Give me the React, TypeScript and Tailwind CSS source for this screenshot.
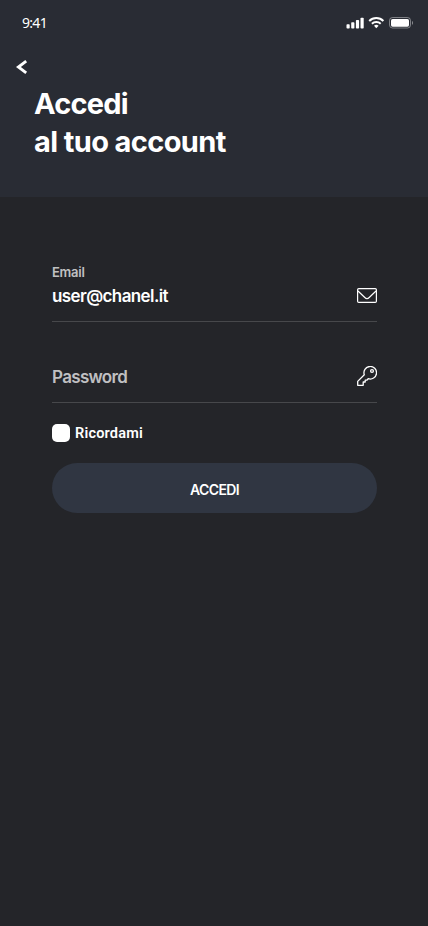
import React from "react";

function StatusBar() {
  return (
    <div className="flex h-[46px] items-center justify-between pl-[22px] pr-[15px] text-white">
      <span className="font-['Noto_Sans',sans-serif] text-[14px] leading-[20px] tracking-[-0.7px]">9:41</span>
      <svg width="67" height="14" viewBox="0 0 67 14" fill="none">
        <rect x="0.5" y="8.3" width="3.2" height="4.2" rx="0.8" fill="white" />
        <rect x="5.2" y="6.3" width="3.2" height="6.2" rx="0.8" fill="white" />
        <rect x="9.9" y="4" width="3.2" height="8.5" rx="0.8" fill="white" />
        <rect x="14.5" y="1.8" width="3.2" height="10.7" rx="0.8" fill="white" />
        <path d="M23.2 5A10.2 10.2 0 0 1 37.4 5M25.9 7.7A6.4 6.4 0 0 1 34.7 7.7" stroke="white" strokeWidth="2" />
        <path d="M28 9.8A3.5 3.5 0 0 1 32.6 9.8L30.3 12.2Z" fill="white" />
        <rect x="43.5" y="1.5" width="21" height="10.5" rx="3" stroke="white" strokeOpacity="0.4" />
        <rect x="45" y="3" width="18" height="7.7" rx="1.6" fill="white" />
        <path d="M66 5V8.8C66.8 8.3 67 7.6 67 6.9S66.7 5.4 66 5Z" fill="white" fillOpacity="0.45" />
      </svg>
    </div>
  );
}

function MailIcon() {
  return (
    <svg width="20" height="15" viewBox="0 0 20 15" fill="none" stroke="white" strokeWidth="1.2">
      <rect x="0.6" y="0.6" width="18.8" height="13.8" rx="1.2" />
      <path d="M1 3L7.8 9.5Q10 11.6 12.2 9.5L19 3" strokeLinejoin="round" />
    </svg>
  );
}

function KeyIcon() {
  return (
    <svg width="20" height="20" viewBox="0 0 20 20" fill="none" stroke="white" strokeWidth="1.3" strokeLinejoin="round">
      <path d="M7.3 8.8A6.3 6.3 0 1 1 11.2 12.7L9.8 14.2H8.2V16H6.2V19.3H0.7V15.4Z" />
      <circle cx="15" cy="5" r="1.4" />
    </svg>
  );
}

export default function App() {
  return (
    <main className="min-h-[926px] w-full bg-[#242529] font-['Inter',sans-serif]">
      <header className="h-[197px] bg-[#292c34]">
        <StatusBar />
        <button aria-label="Indietro" className="ml-[16px] mt-[13px] block h-[16px] w-[12px]">
          <svg width="12" height="16" viewBox="0 0 12 16" fill="none">
            <path d="M10.2 2.2L2.4 8L10.2 13.8" stroke="white" strokeWidth="2.9" />
          </svg>
        </button>
        <h1 className="ml-[34px] mt-[10px] text-[29px] font-bold leading-[38px] tracking-[-0.62px] text-white">
          <span className="tracking-[-0.8px]">Accedi</span>
          <br />
          al tuo account
        </h1>
      </header>
      <form className="px-[52px] pt-[66px]">
        <div className="flex h-[59px] w-[325px] justify-between border-b border-[#47484b]">
          <div className="flex flex-col">
            <label className="h-[18px] text-[13px] font-semibold leading-[18px] tracking-[-0.25px] text-[#c0c0c2]">Email</label>
            <span className="mt-[3px] text-[17px] font-semibold leading-[24px] tracking-[-0.6px] text-white">user@chanel.it</span>
          </div>
          <div className="mt-[25px]">
            <MailIcon />
          </div>
        </div>
        <div className="mt-[40px] flex h-[41px] w-[325px] justify-between border-b border-[#47484b]">
          <span className="mt-[3px] text-[17px] font-semibold leading-[24px] tracking-[-0.68px] text-[#c0c0c2]">Password</span>
          <div className="mt-[4px]">
            <KeyIcon />
          </div>
        </div>
        <label className="mt-[21px] flex h-[18px] items-center gap-[5px]">
          <span className="size-[18px] rounded-[5px] bg-white" />
          <span className="pt-[2px] font-['Roboto',sans-serif] text-[14.5px] font-semibold leading-[18px] tracking-[0.2px] text-white">Ricordami</span>
        </label>
        <button type="button" className="mt-[21px] flex h-[50px] w-[325px] items-center justify-center rounded-full bg-[#303642] pt-[3px] text-[14px] font-semibold tracking-[-0.6px] text-white">
          ACCEDI
        </button>
      </form>
    </main>
  );
}
